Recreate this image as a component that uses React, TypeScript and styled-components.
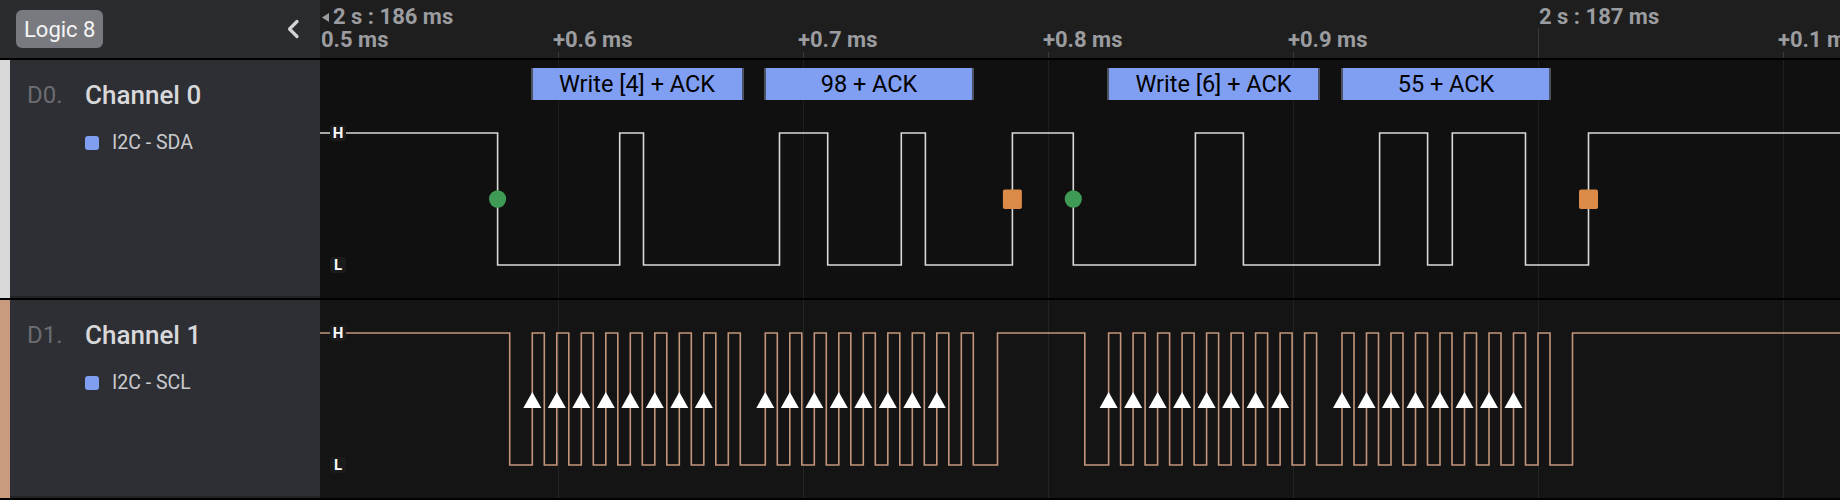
import styled, { createGlobalStyle } from 'styled-components';

const GlobalStyle = createGlobalStyle`
  html, body {
    margin: 0;
    padding: 0;
    background: #000;
  }
  body {
    font-family: Roboto, 'Noto Sans', sans-serif;
  }
`;

// page x where the timeline begins
const X0 = 320;
const TL_W = 1520;
const TICK0 = 238;
const TICK_STEP = 245;

const ticks = [0, 1, 2, 3, 4, 5].map((k) => TICK0 + k * TICK_STEP);

const tickLabels = [
  { text: '+0.6 ms', at: ticks[0] },
  { text: '+0.7 ms', at: ticks[1] },
  { text: '+0.8 ms', at: ticks[2] },
  { text: '+0.9 ms', at: ticks[3] },
  { text: '+0.1 ms', at: ticks[5] },
];

// SDA edges, page coords, starts high
const sdaEdges = [
  497.6, 619.7, 643.5, 779.5, 827.7, 901.3, 925.4, 1012.4, 1073.3, 1195.4,
  1243.4, 1379.6, 1427.6, 1452.3, 1525.5, 1588.5,
];

const groups = [532.3, 765.3, 1108.6, 1342];
const PERIOD = 24.5;
const PULSE = 12;

const sclEdges: number[] = [509.7];
const clockRises: number[] = [];
groups.forEach((g, gi) => {
  for (let k = 0; k < 9; k++) {
    const r = g + k * PERIOD;
    sclEdges.push(r, r + PULSE);
    if (k < 8) clockRises.push(r);
  }
  if (gi === 1) sclEdges.push(997.5, 1084.8);
});
sclEdges.push(1572.5);

const frames = [
  { left: 530.5, right: 743.5, text: 'Write [4] + ACK' },
  { left: 764, right: 974, text: '98 + ACK' },
  { left: 1107, right: 1320, text: 'Write [6] + ACK' },
  { left: 1341, right: 1551, text: '55 + ACK' },
];

const starts = [497.6, 1073.3];
const stops = [1012.4, 1588.5];

function wavePath(edges: number[], hi: number, lo: number) {
  let y = hi;
  let d = `M0 ${y}`;
  edges.forEach((e) => {
    const next = y === hi ? lo : hi;
    d += ` H${(e - X0).toFixed(1)} V${next}`;
    y = next;
  });
  return d + ` H${TL_W}`;
}

const Screen = styled.div`
  width: 1840px;
  height: 500px;
  display: flex;
  flex-direction: column;
  overflow: hidden;
  background: #000;
`;

const HeaderRow = styled.div`
  display: flex;
  flex: none;
  height: 58px;
  border-bottom: 2px solid #000;
`;

const SideHead = styled.div`
  width: 320px;
  flex: none;
  box-sizing: border-box;
  display: flex;
  align-items: center;
  justify-content: space-between;
  padding: 0 19px 0 16px;
  background: #2b2c30;
`;

const DeviceBadge = styled.div`
  height: 38px;
  padding: 0 8px;
  display: flex;
  align-items: center;
  border-radius: 6px;
  background: #797a80;
  color: #f5f5f5;
  font-size: 22px;
`;

const CollapseButton = styled.button`
  display: flex;
  align-items: center;
  justify-content: center;
  width: 16px;
  height: 24px;
  padding: 0;
  border: 0;
  background: none;
  color: #d4d4d6;
`;

const Ruler = styled.div`
  position: relative;
  flex: 1;
  background: #1e1e1e;
  overflow: hidden;
`;

const RulerText = styled.span<{ $line: 1 | 2 }>`
  position: absolute;
  top: ${(p) => (p.$line === 1 ? 5 : 28)}px;
  display: flex;
  align-items: center;
  gap: 4px;
  white-space: nowrap;
  color: #9b9ca0;
  font-size: 22px;
  font-weight: 700;
  line-height: 24px;
`;

const RulerTick = styled.div<{ $major?: boolean }>`
  position: absolute;
  bottom: 0;
  width: 1px;
  height: ${(p) => (p.$major ? 30 : 6)}px;
  background: #3a3a3a;
`;

const ChannelRow = styled.div<{ $h: number }>`
  display: flex;
  flex: none;
  height: ${(p) => p.$h}px;
  border-bottom: 2px solid #000;
`;

const ChannelSide = styled.div`
  width: 320px;
  flex: none;
  display: flex;
  background: #2e2f34;
  box-shadow: inset 0 -2px 0 #222327;
`;

const Strip = styled.div<{ $color: string }>`
  width: 10px;
  flex: none;
  background: ${(p) => p.$color};
`;

const ChannelInfo = styled.div`
  display: grid;
  grid-template-columns: 58px auto;
  align-content: start;
  row-gap: 24px;
  padding: 21px 0 0 17px;
`;

const ChannelIndex = styled.div`
  color: #6b6c71;
  font-size: 24px;
  line-height: 28px;
`;

const ChannelName = styled.div`
  color: #d8d8da;
  font-size: 26px;
  font-weight: 500;
  line-height: 28px;
`;

const AnalyzerTag = styled.div`
  grid-column: 2;
  display: flex;
  align-items: center;
  gap: 13px;
  color: #c9cacd;
  font-size: 19.5px;
  line-height: 20px;
`;

const TagSwatch = styled.span`
  width: 14px;
  height: 14px;
  border-radius: 3px;
  background: #7f9ef2;
`;

const Trace = styled.div<{ $bg: string }>`
  position: relative;
  flex: 1;
  background: ${(p) => p.$bg};
  overflow: hidden;

  svg {
    display: block;
  }
`;

const LevelChip = styled.span<{ $y: number }>`
  position: absolute;
  left: 10px;
  top: ${(p) => p.$y - 8}px;
  width: 16px;
  height: 16px;
  display: flex;
  align-items: center;
  justify-content: center;
  border-radius: 3px;
  background: #1b1b1b;
  color: #fff;
  font-size: 15px;
  font-weight: 700;
`;

const Frame = styled.div`
  position: absolute;
  top: 8px;
  height: 32px;
  box-sizing: border-box;
  display: flex;
  align-items: center;
  justify-content: center;
  border-left: 2px solid #4c5261;
  border-right: 2px solid #4c5261;
  background: #809ff2;
  color: #000;
  font-size: 23.5px;
  white-space: nowrap;
`;

const Grid = ({ h, color }: { h: number; color: string }) => (
  <>
    {ticks.map((t) => (
      <line key={t} x1={t + 0.5} x2={t + 0.5} y1={0} y2={h} stroke={color} strokeWidth={1} />
    ))}
  </>
);

const SDA_HI = 73;
const SDA_LO = 205;
const SCL_HI = 33;
const SCL_LO = 165;

const App = () => {
  return (
    <Screen>
      <GlobalStyle />
      <HeaderRow>
        <SideHead>
          <DeviceBadge>Logic 8</DeviceBadge>
          <CollapseButton aria-label="Collapse">
            <svg width="14" height="20" viewBox="0 0 14 20">
              <polyline
                points="11,2.5 3.5,10 11,17.5"
                fill="none"
                stroke="currentColor"
                strokeWidth="3.2"
                strokeLinecap="round"
                strokeLinejoin="round"
              />
            </svg>
          </CollapseButton>
        </SideHead>
        <Ruler>
          <RulerText $line={1} style={{ left: 2 }}>
            <svg width="7" height="9" viewBox="0 0 7 9">
              <polygon points="7,0 7,9 0,4.5" fill="#9b9ca0" />
            </svg>
            2 s : 186 ms
          </RulerText>
          <RulerText $line={2} style={{ left: 1 }}>
            0.5 ms
          </RulerText>
          {tickLabels.map((l) => (
            <RulerText key={l.text + l.at} $line={2} style={{ left: l.at - 5 }}>
              {l.text}
            </RulerText>
          ))}
          <RulerText $line={1} style={{ left: ticks[4] + 1 }}>
            2 s : 187 ms
          </RulerText>
          {ticks.map((t, i) => (
            <RulerTick key={t} $major={i === 4} style={{ left: t }} />
          ))}
        </Ruler>
      </HeaderRow>

      <ChannelRow $h={238}>
        <ChannelSide>
          <Strip $color="#d9d9d9" />
          <ChannelInfo>
            <ChannelIndex>D0.</ChannelIndex>
            <ChannelName>Channel 0</ChannelName>
            <AnalyzerTag>
              <TagSwatch />
              I2C - SDA
            </AnalyzerTag>
          </ChannelInfo>
        </ChannelSide>
        <Trace $bg="#101010">
          <svg width={TL_W} height={238}>
            <Grid h={238} color="#1e1e1e" />
            <path d={wavePath(sdaEdges, SDA_HI, SDA_LO)} fill="none" stroke="#d9d9d9" strokeWidth={1.6} />
            {starts.map((x) => (
              <ellipse key={x} cx={x - X0} cy={139} rx={8.6} ry={8.8} fill="#3e9a55" />
            ))}
            {stops.map((x) => (
              <rect key={x} x={x - X0 - 9.5} y={129.5} width={19} height={19.5} rx={2} fill="#dc8a48" />
            ))}
          </svg>
          {frames.map((f) => (
            <Frame key={f.text} style={{ left: f.left - X0, width: f.right - f.left }}>
              {f.text}
            </Frame>
          ))}
          <LevelChip $y={SDA_HI}>H</LevelChip>
          <LevelChip $y={SDA_LO}>L</LevelChip>
        </Trace>
      </ChannelRow>

      <ChannelRow $h={198}>
        <ChannelSide>
          <Strip $color="#c89b7e" />
          <ChannelInfo>
            <ChannelIndex>D1.</ChannelIndex>
            <ChannelName>Channel 1</ChannelName>
            <AnalyzerTag>
              <TagSwatch />
              I2C - SCL
            </AnalyzerTag>
          </ChannelInfo>
        </ChannelSide>
        <Trace $bg="#141414">
          <svg width={TL_W} height={198}>
            <Grid h={198} color="#242424" />
            <path d={wavePath(sclEdges, SCL_HI, SCL_LO)} fill="none" stroke="#c3957a" strokeWidth={1.6} />
            {clockRises.map((x) => {
              const cx = x - X0;
              return <polygon key={x} points={`${cx - 9},108 ${cx + 9},108 ${cx},92`} fill="#fff" />;
            })}
          </svg>
          <LevelChip $y={SCL_HI}>H</LevelChip>
          <LevelChip $y={SCL_LO}>L</LevelChip>
        </Trace>
      </ChannelRow>
    </Screen>
  );
};

export default App;
